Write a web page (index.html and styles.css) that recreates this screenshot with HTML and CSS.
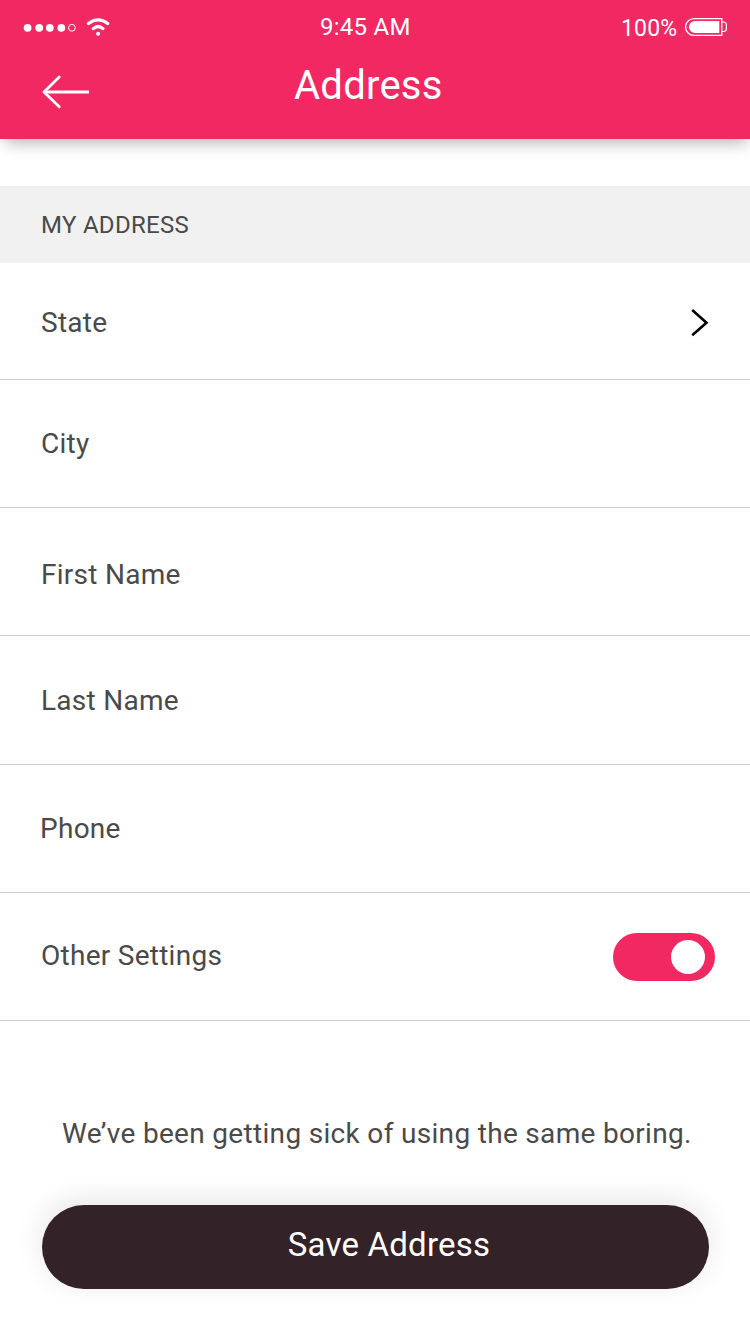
FILE: index.html
```html
<!DOCTYPE html>
<html lang="en">
<head>
<meta charset="utf-8">
<title>Address</title>
<link rel="stylesheet" href="styles.css">
</head>
<body>
<div class="screen">
  <header class="header">
    <div class="status">
      <svg class="signal" width="90" height="20" viewBox="0 0 90 20" fill="#fff">
        <circle cx="4.6" cy="9.8" r="3.9"/><circle cx="16.2" cy="9.8" r="3.9"/><circle cx="26.8" cy="9.8" r="3.9"/><circle cx="38.3" cy="9.8" r="3.9"/>
        <circle cx="48.9" cy="9.8" r="3.4" fill="none" stroke="#fff"/>
        <path d="M65.5 5.6Q75.1-1.8 84.7 5.6M70.3 10.6Q75.1 6.4 79.9 10.6" fill="none" stroke="#fff" stroke-width="3.2" stroke-linecap="round"/>
        <circle cx="75.1" cy="15.7" r="2"/>
      </svg>
      <span class="time">9:45 AM</span>
      <span class="charge">100%</span>
      <svg class="battery" width="43" height="20" viewBox="0 0 43 20" fill="none" stroke="#fff">
        <path d="M9 1.6H36.8V18.4H9A8.4 8.4 0 0 1 9 1.6Z" stroke-width="1.3"/>
        <path d="M10 3.9H34.3V16.1H10A6.1 6.1 0 0 1 10 3.9Z" fill="#fff" stroke="none"/>
        <path d="M37 5H38.4Q41.4 5 41.4 8V11.5Q41.4 14.5 38.4 14.5H37" stroke-width="1.2"/>
      </svg>
    </div>
    <div class="nav">
      <svg class="back" width="48" height="34" viewBox="0 0 48 34" fill="none" stroke="#fff" stroke-width="2.8">
        <path d="M2 17H47"/><path d="M17.2 2L2 17L17.2 31.8" stroke-linecap="round" stroke-linejoin="round"/>
      </svg>
      <h1 class="title">Address</h1>
    </div>
  </header>
  <h2 class="section">MY ADDRESS</h2>
  <ul class="rows">
    <li class="row state"><span>State</span>
      <svg class="chevron" width="20" height="30" viewBox="0 0 20 30" fill="none" stroke="#000" stroke-width="2.6"><path d="M2.2 2L16.5 14.8L2.2 27.3"/></svg>
    </li>
    <li class="row city"><span>City</span></li>
    <li class="row first"><span>First Name</span></li>
    <li class="row last"><span>Last Name</span></li>
    <li class="row phone"><span>Phone</span></li>
    <li class="row other"><span>Other Settings</span><span class="toggle"><span class="knob"></span></span></li>
  </ul>
  <p class="message">We’ve been getting sick of using the same boring.</p>
  <button class="save">Save Address</button>
</div>
</body>
</html>
```
FILE: styles.css
```css
* { box-sizing: border-box; }
body { margin: 0; background: #fff; font-family: Roboto, "Liberation Sans", sans-serif; color: #4a4a4a; }
.screen { width: 750px; height: 1334px; overflow: hidden; background: #fff; }
.header { height: 139px; background: #f22862; color: #fff; box-shadow: 1px 9px 14px -4px rgba(0, 0, 0, .26); }
.status { display: flex; height: 54px; align-items: flex-start; }
.signal { margin: 18px 0 0 23px; }
.time { width: 110px; margin: 13px 0 0 207px; font-size: 24px; line-height: 28px; letter-spacing: .25px; white-space: nowrap; }
.charge { width: 64px; margin: 15px 0 0 191px; font-size: 23px; line-height: 27px; letter-spacing: .15px; }
.battery { margin-top: 17px; }
.nav { display: flex; align-items: flex-start; }
.back { margin: 21px 0 0 42px; }
.title { margin: 8px 0 0 204px; font-size: 40px; font-weight: 400; line-height: 47px; letter-spacing: .25px; }
.section { height: 77px; margin: 47px 0 0; padding: 25px 41px 0 41px; background: #f1f1f1; font-size: 24px; font-weight: 400; line-height: 28px; letter-spacing: .3px; }
.rows { margin: 0; padding: 0; list-style: none; }
.row { display: flex; justify-content: space-between; align-items: flex-start; height: 128px; padding: 0 35px 0 41px; border-bottom: 1px solid #cfcfcf; font-size: 28px; line-height: 33px; letter-spacing: .27px; }
.state { height: 117px; padding-top: 43px; padding-right: 40px; }
.chevron { margin-top: 2px; }
.city { padding-top: 47px; }
.first { padding-top: 50px; }
.last { height: 129px; padding-top: 48px; }
.phone { padding-top: 47px; padding-left: 40px; }
.other { padding-top: 46px; }
.toggle { display: flex; justify-content: flex-end; align-items: center; width: 102px; height: 48px; margin-top: -6px; padding-right: 10px; border-radius: 24px; background: #f22862; }
.knob { width: 34px; height: 34px; border-radius: 50%; background: #fff; }
.message { margin: 96px 0 0 62px; font-size: 28px; line-height: 33px; letter-spacing: .32px; white-space: nowrap; }
.save { display: block; width: 667px; height: 84px; margin: 55px 0 0 42px; padding: 0 0 5px 27px; border: 0; border-radius: 42px; background: #332228; box-shadow: 0 -6px 30px rgba(0, 0, 0, .1); color: #fff; font: 400 33px/39px Roboto, "Liberation Sans", sans-serif; letter-spacing: .2px; }
```
